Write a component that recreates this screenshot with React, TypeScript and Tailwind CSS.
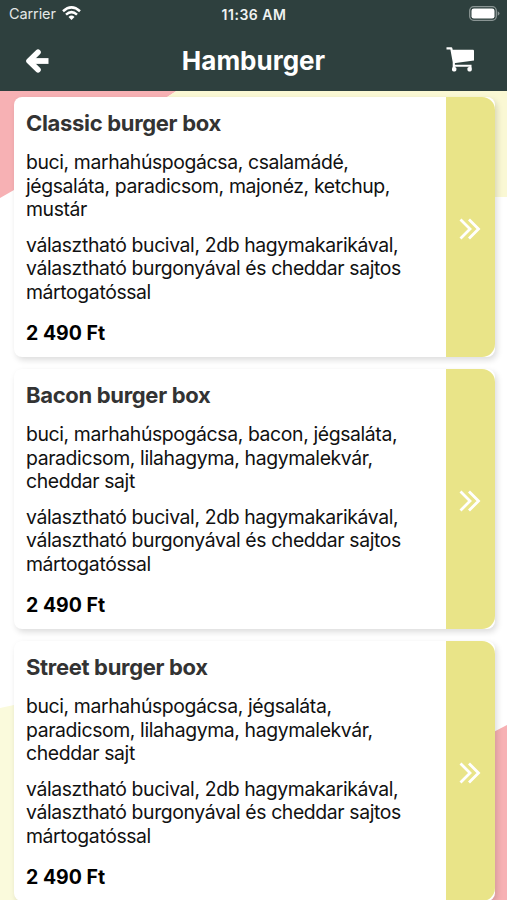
interface BurgerProps {
  title: string;
  ingredients: string[];
  extras: string[];
  price: string;
}

const extras = [
  "választható bucival, 2db hagymakarikával,",
  "választható burgonyával és cheddar sajtos",
  "mártogatóssal",
];

const burgers: BurgerProps[] = [
  {
    title: "Classic burger box",
    ingredients: [
      "buci, marhahúspogácsa, csalamádé,",
      "jégsaláta, paradicsom, majonéz, ketchup,",
      "mustár",
    ],
    extras,
    price: "2 490 Ft",
  },
  {
    title: "Bacon burger box",
    ingredients: [
      "buci, marhahúspogácsa, bacon, jégsaláta,",
      "paradicsom, lilahagyma, hagymalekvár,",
      "cheddar sajt",
    ],
    extras,
    price: "2 490 Ft",
  },
  {
    title: "Street burger box",
    ingredients: [
      "buci, marhahúspogácsa, jégsaláta,",
      "paradicsom, lilahagyma, hagymalekvár,",
      "cheddar sajt",
    ],
    extras,
    price: "2 490 Ft",
  },
];

const Lines = ({ lines }: { lines: string[] }) => (
  <div className="text-[19.4px] leading-[23.5px] tracking-[-0.38px] text-[#111111]">
    {lines.map((line) => (
      <p key={line} className="whitespace-nowrap">
        {line}
      </p>
    ))}
  </div>
);

const BurgerCard = ({ title, ingredients, extras, price }: BurgerProps) => {
  return (
    <div className="flex h-[260px] shrink-0 overflow-hidden rounded-[8px] bg-white shadow-[2px_3px_6px_rgba(0,0,0,0.14)]">
      {/* TEXTS */}
      <div className="w-[432px] shrink-0 pl-3 pt-3">
        <h2 className="text-[22px] font-bold leading-7 tracking-[-0.32px] text-[#333333]">{title}</h2>
        <div className="mt-[14px] flex flex-col gap-3">
          <Lines lines={ingredients} />
          <Lines lines={extras} />
        </div>
        <p className="mt-[17px] text-[19.5px] font-bold leading-6 text-black">{price}</p>
      </div>

      {/* OPEN BUTTON */}
      <button className="flex flex-1 items-center justify-center rounded-r-[13px] bg-[#e9e488]">
        <svg className="mr-[1px] mt-1 h-[22px] w-[22px]" viewBox="0 0 22 22" fill="none" stroke="white" strokeWidth="2.8">
          <path d="M1.5 1.5 11 11 1.5 20.5M10 1.5 19.5 11 10 20.5" />
        </svg>
      </button>
    </div>
  );
};

const Background = () => (
  <svg className="absolute inset-0 -z-10 h-full w-full" viewBox="0 0 507 900">
    <path d="M0 90H178L150 108 14 190 0 198Z" fill="#f7b1b4" />
    <path d="M178 90H507V197H420L150 108Z" fill="#faf8d4" />
    <path d="M0 708 14 705 130 720V900H0Z" fill="#fafadc" />
    <path d="M507 725 480 739V900H507Z" fill="#f7b1b4" />
  </svg>
);

const App = () => {
  return (
    <div className="relative isolate h-[900px] w-[507px] overflow-hidden bg-white font-[Inter,sans-serif]">
      <Background />

      {/* HEADER */}
      <header className="h-[91px] bg-[#2e403e] text-white">
        <div className="grid h-7 grid-cols-3 items-center pl-[9px] pr-[7px]">
          <div className="flex items-center gap-[6px] text-[14.5px] tracking-[-0.1px] text-[#e4e8e7]">
            <span>Carrier</span>
            <svg className="mb-[2px] h-[14px] w-[19px]" viewBox="0 0 19 14" fill="none" stroke="white" strokeWidth="2.5">
              <path d="M1 5.2Q9.5-2.5 18 5.2M4 8.6Q9.5 3.6 15 8.6" />
              <path d="M6.5 10.9Q9.5 8.3 12.5 10.9L9.5 14Z" fill="white" stroke="none" />
            </svg>
          </div>
          <span className="pr-[1px] text-center text-[14px] font-semibold tracking-[0.5px] text-[#f0f3f2]">11:36 AM</span>
          <svg className="mb-[1px] h-[15px] w-[31px] justify-self-end" viewBox="0 0 31 15">
            <rect x="0.7" y="0.7" width="26.6" height="13.6" rx="4" fill="none" stroke="#8a9594" strokeWidth="1.3" />
            <rect x="2.5" y="2.5" width="23" height="10" rx="2.3" fill="white" />
            <path d="M28.7 5.2Q30.5 6 30.5 7.5T28.7 9.8Z" fill="#8a9594" />
          </svg>
        </div>
        <div className="grid h-[63px] grid-cols-[60px_1fr_60px] items-center pt-[2px]">
          <svg className="ml-[25px] h-6 w-6" viewBox="0 0 24 24" fill="none" stroke="white" strokeLinejoin="round">
            <path d="M13 3.2 4 12 13 20.8" strokeWidth="5.6" strokeLinecap="round" />
            <path d="M4 12H23.5" strokeWidth="5.8" />
          </svg>
          <h1 className="text-center text-[26px] font-bold">Hamburger</h1>
          <svg className="-ml-[1px] mb-[2px] h-[25px] w-7" viewBox="0 0 28 25" fill="none" stroke="white">
            <path d="M0.5 1.4H5.3L7.8 15V21" strokeWidth="2.2" strokeLinejoin="round" />
            <path d="M7 18.7H24.5V21" strokeWidth="2" />
            <path d="M5.5 2.8H27Q28 2.8 28 3.8V13.5L7.8 16.2Z" fill="white" stroke="none" />
            <rect x="6" y="20" width="4.4" height="4.4" rx="1.6" fill="white" stroke="none" />
            <rect x="21.4" y="20" width="4.4" height="4.4" rx="1.6" fill="white" stroke="none" />
          </svg>
        </div>
      </header>

      {/* BURGER LIST */}
      <main className="flex flex-col gap-3 pl-[14px] pr-[12.5px] pt-[6px]">
        {burgers.map((burger) => (
          <BurgerCard key={burger.title} {...burger} />
        ))}
      </main>
    </div>
  );
};

export default App;
